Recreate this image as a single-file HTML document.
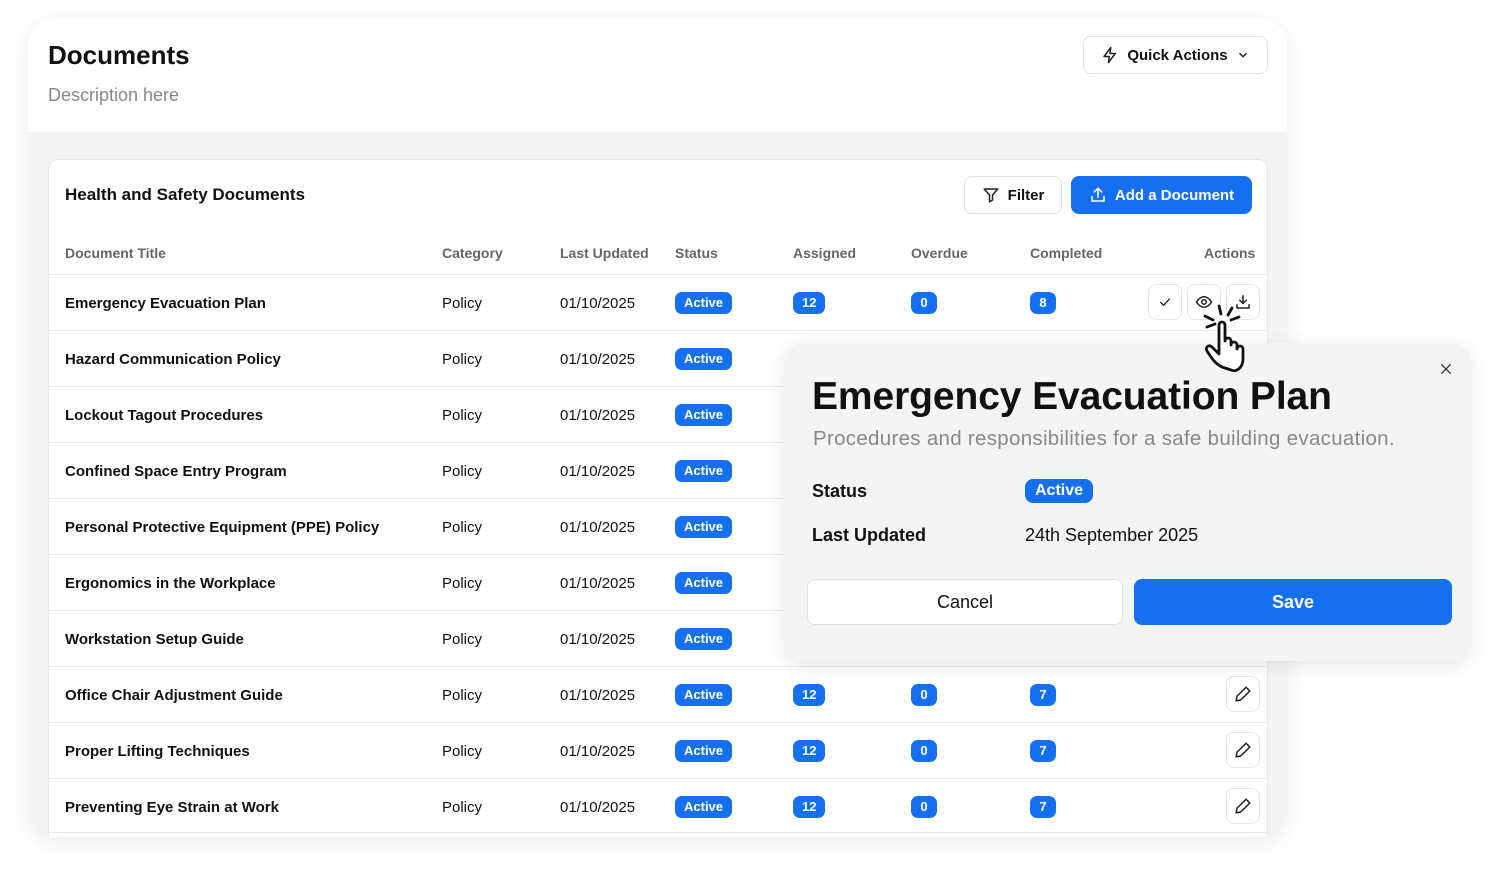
<!DOCTYPE html><html><head><style>
*{box-sizing:border-box;margin:0;padding:0}
body{width:1500px;height:872px;background:#fff;font-family:"Liberation Sans",sans-serif;position:relative;overflow:hidden;color:#111}
.outer{position:absolute;left:28px;top:18px;width:1259px;height:819px;border-radius:28px;background:#f4f4f4;overflow:hidden;box-shadow:0 6px 24px rgba(0,0,0,.08)}
.head{position:absolute;left:0;top:0;width:100%;height:114px;background:#fff}
.card{position:absolute;left:20px;top:141px;width:1220px;height:700px;background:#fff;border:1px solid #e6e6e6;border-radius:10px}
.abs{position:absolute}
.btn{position:absolute;border:1px solid #e2e2e2;border-radius:8px;background:#fff;display:flex;align-items:center;justify-content:center;font-weight:bold;font-size:15px;gap:8px}
.th{position:absolute;top:245px;font-size:14px;color:#666;font-weight:bold}
.row{position:absolute;left:49px;width:1219px;height:56px;border-top:1px solid #e8e8e8;font-size:15px}
.row span{position:absolute;top:20px}
.badge{position:absolute;top:17px;background:#1570ef;color:#fff;font-weight:bold;font-size:13px;border-radius:7px;height:22px;line-height:22px;padding:0 9px;text-align:center;min-width:26px}
.ib{position:absolute;width:34px;height:36px;border:1px solid #e4e4e4;border-radius:8px;top:9px;display:flex;align-items:center;justify-content:center;background:#fff}
.pop{position:absolute;left:784px;top:343px;width:687px;height:318px;background:#f4f4f4;border-radius:20px;box-shadow:0 4px 18px rgba(0,0,0,.1)}
</style></head><body>
<div class="outer">
<div class="head"></div>
<div class="abs" style="left:20px;top:22px;font-size:26px;font-weight:bold">Documents</div>
<div class="abs" style="left:20px;top:67px;font-size:18px;color:#888">Description here</div>
<div class="btn" style="left:1055px;top:18px;width:185px;height:38px"><svg width="18" height="18" viewBox="0 0 24 24" fill="none" stroke="#222" stroke-width="2" stroke-linejoin="round"><path d="M13 2L4 14h7l-1 8 9-12h-7z"/></svg>Quick Actions<svg width="14" height="14" viewBox="0 0 24 24" fill="none" stroke="#222" stroke-width="2.5"><path d="M6 9l6 6 6-6"/></svg></div>
<div class="card"></div>
</div>
<div class="abs" style="left:65px;top:185px;font-size:17px;font-weight:bold">Health and Safety Documents</div>
<div class="btn" style="left:964px;top:176px;width:98px;height:38px"><svg width="18" height="18" viewBox="0 0 24 24" fill="none" stroke="#222" stroke-width="2" stroke-linejoin="round"><path d="M3 4h18l-7 8v7l-4 2v-9z"/></svg>Filter</div>
<div class="btn" style="left:1071px;top:176px;width:181px;height:38px;background:#1570ef;border-color:#1570ef;color:#fff"><svg width="18" height="18" viewBox="0 0 24 24" fill="none" stroke="#fff" stroke-width="2" stroke-linecap="round"><path d="M12 15V3M7 8l5-5 5 5M4 14v6h16v-6"/></svg>Add a Document</div>
<div class="th" style="left:65px">Document Title</div><div class="th" style="left:442px">Category</div><div class="th" style="left:560px">Last Updated</div><div class="th" style="left:675px">Status</div><div class="th" style="left:793px">Assigned</div><div class="th" style="left:911px">Overdue</div><div class="th" style="left:1030px">Completed</div><div class="th" style="left:1204px">Actions</div>

<div class="row" style="top:274px"><span style="left:16px;font-weight:bold">Emergency Evacuation Plan</span><span style="left:393px">Policy</span><span style="left:511px">01/10/2025</span><div class="badge" style="left:626px">Active</div><div class="badge" style="left:744px">12</div><div class="badge" style="left:862px">0</div><div class="badge" style="left:981px">8</div>
<div class="ib" style="left:1099px"><svg width="16" height="16" viewBox="0 0 24 24" fill="none" stroke="#222" stroke-width="2"><path d="M5 12l5 5 9-10"/></svg></div>
<div class="ib" style="left:1138px"><svg width="18" height="18" viewBox="0 0 24 24" fill="none" stroke="#222" stroke-width="2"><path d="M2 12s4-7 10-7 10 7 10 7-4 7-10 7S2 12 2 12z"/><circle cx="12" cy="12" r="3"/></svg></div>
<div class="ib" style="left:1177px"><svg width="18" height="18" viewBox="0 0 24 24" fill="none" stroke="#222" stroke-width="2"><path d="M12 3v11M7 9l5 5 5-5M4 15v5h16v-5"/></svg></div></div>
<div class="row" style="top:330px"><span style="left:16px;font-weight:bold">Hazard Communication Policy</span><span style="left:393px">Policy</span><span style="left:511px">01/10/2025</span><div class="badge" style="left:626px">Active</div></div>
<div class="row" style="top:386px"><span style="left:16px;font-weight:bold">Lockout Tagout Procedures</span><span style="left:393px">Policy</span><span style="left:511px">01/10/2025</span><div class="badge" style="left:626px">Active</div></div>
<div class="row" style="top:442px"><span style="left:16px;font-weight:bold">Confined Space Entry Program</span><span style="left:393px">Policy</span><span style="left:511px">01/10/2025</span><div class="badge" style="left:626px">Active</div></div>
<div class="row" style="top:498px"><span style="left:16px;font-weight:bold">Personal Protective Equipment (PPE) Policy</span><span style="left:393px">Policy</span><span style="left:511px">01/10/2025</span><div class="badge" style="left:626px">Active</div></div>
<div class="row" style="top:554px"><span style="left:16px;font-weight:bold">Ergonomics in the Workplace</span><span style="left:393px">Policy</span><span style="left:511px">01/10/2025</span><div class="badge" style="left:626px">Active</div></div>
<div class="row" style="top:610px"><span style="left:16px;font-weight:bold">Workstation Setup Guide</span><span style="left:393px">Policy</span><span style="left:511px">01/10/2025</span><div class="badge" style="left:626px">Active</div></div>
<div class="row" style="top:666px"><span style="left:16px;font-weight:bold">Office Chair Adjustment Guide</span><span style="left:393px">Policy</span><span style="left:511px">01/10/2025</span><div class="badge" style="left:626px">Active</div><div class="badge" style="left:744px">12</div><div class="badge" style="left:862px">0</div><div class="badge" style="left:981px">7</div><div class="ib" style="left:1177px"><svg width="18" height="18" viewBox="0 0 24 24" fill="none" stroke="#222" stroke-width="2"><path d="M16 3l5 5L9 20l-6 1 1-6z"/></svg></div></div>
<div class="row" style="top:722px"><span style="left:16px;font-weight:bold">Proper Lifting Techniques</span><span style="left:393px">Policy</span><span style="left:511px">01/10/2025</span><div class="badge" style="left:626px">Active</div><div class="badge" style="left:744px">12</div><div class="badge" style="left:862px">0</div><div class="badge" style="left:981px">7</div><div class="ib" style="left:1177px"><svg width="18" height="18" viewBox="0 0 24 24" fill="none" stroke="#222" stroke-width="2"><path d="M16 3l5 5L9 20l-6 1 1-6z"/></svg></div></div>
<div class="row" style="top:778px;height:55px;border-bottom:1px solid #e8e8e8"><span style="left:16px;font-weight:bold">Preventing Eye Strain at Work</span><span style="left:393px">Policy</span><span style="left:511px">01/10/2025</span><div class="badge" style="left:626px">Active</div><div class="badge" style="left:744px">12</div><div class="badge" style="left:862px">0</div><div class="badge" style="left:981px">7</div><div class="ib" style="left:1177px"><svg width="18" height="18" viewBox="0 0 24 24" fill="none" stroke="#222" stroke-width="2"><path d="M16 3l5 5L9 20l-6 1 1-6z"/></svg></div></div>

<div class="pop">
<svg class="abs" style="left:654px;top:18px" width="16" height="16" viewBox="0 0 24 24" fill="none" stroke="#333" stroke-width="2"><path d="M5 5l14 14M19 5L5 19"/></svg>
<div class="abs" style="left:28px;top:32px;font-size:39px;font-weight:bold;letter-spacing:-.1px">Emergency Evacuation Plan</div>
<div class="abs" style="left:29px;top:84px;font-size:20.5px;color:#888;letter-spacing:.3px">Procedures and responsibilities for a safe building evacuation.</div>
<div class="abs" style="left:28px;top:138px;font-size:18px;font-weight:bold">Status</div>
<div class="abs" style="left:241px;top:136px;background:#1570ef;color:#fff;font-weight:bold;font-size:16px;border-radius:8px;padding:3px 10px">Active</div>
<div class="abs" style="left:28px;top:182px;font-size:18px;font-weight:bold">Last Updated</div>
<div class="abs" style="left:241px;top:182px;font-size:18px">24th September 2025</div>
<div class="btn" style="left:23px;top:236px;width:316px;height:46px;font-size:18px;font-weight:normal;color:#111">Cancel</div>
<div class="btn" style="left:350px;top:236px;width:318px;height:46px;font-size:18px;background:#1570ef;border-color:#1570ef;color:#fff">Save</div>
</div>
<svg class="abs" style="left:1198px;top:300px" width="70" height="72" viewBox="0 0 70 72" fill="#fff" stroke="#111" stroke-width="2.8" stroke-linecap="round" stroke-linejoin="round"><path d="M7 16l8 4M9 27l8-3M21 6l2 8M34 8l-4 7M41 17l-8 3"/><path d="M27 68c-8-2-13-9-18-17-2-4 2-7 5-4l7 7V25c0-4 6-4 6 0v16c0-4 6-4 6 0v4c0-4 6-4 6 0v4c0-4 6-4 6 0v10c0 7-4 11-9 12z"/></svg>
</body></html>
